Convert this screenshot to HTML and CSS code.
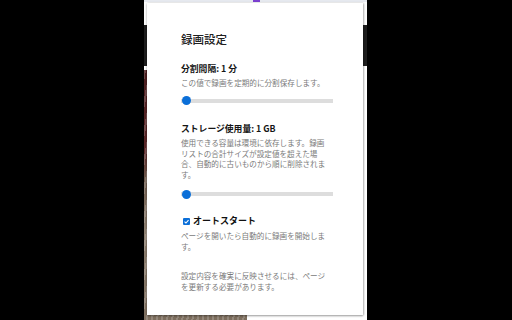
FILE: index.html
```html
<!DOCTYPE html>
<html lang="ja">
<head>
<meta charset="utf-8">
<title>録画設定</title>
<link rel="stylesheet" href="styles.css">
</head>
<body>
<div class="page">
  <div class="bg-band"><span class="bg-mark"></span></div>
  <div class="bg-head"></div>
  <div class="bg-dark"></div>
  <div class="bg-gap"></div>
  <div class="bg-body">
    <div class="photo"></div>
    <div class="bg-text"></div>
  </div>

  <section class="popup">
    <h1 class="title">録画設定</h1>

    <div class="label label-first">分割間隔: 1 分</div>
    <p class="desc desc-first">この値で録画を定期的に分割保存します。</p>
    <div class="slider slider-first"><span class="thumb"></span></div>

    <div class="label label-second">ストレージ使用量: 1 GB</div>
    <p class="desc desc-second">使用できる容量は環境に依存します。録画リストの合計サイズが設定値を超えた場合、自動的に古いものから順に削除されます。</p>
    <div class="slider slider-second"><span class="thumb"></span></div>

    <div class="check-row">
      <span class="checkbox"><svg viewBox="0 0 10 10" width="7" height="7"><path d="M2.2 5.2 L4.2 7.2 L7.9 2.9" fill="none" stroke="#fff" stroke-width="1.6"/></svg></span>
      <span class="check-label">オートスタート</span>
    </div>
    <p class="desc desc-third">ページを開いたら自動的に録画を開始します。</p>

    <p class="desc footer">設定内容を確実に反映させるには、ページを更新する必要があります。</p>
  </section>
</div>
</body>
</html>
```

FILE: styles.css
```css
html, body {
  margin: 0;
  padding: 0;
}
body {
  width: 512px;
  height: 320px;
  overflow: hidden;
  background: #000;
  font-family: "Noto Sans CJK JP", "Noto Sans", sans-serif;
}
.page {
  position: relative;
  margin-left: 144px;
  width: 223px;
  height: 320px;
  display: flex;
  flex-direction: column;
  background: #fff;
}
.bg-band {
  height: 2px;
  background: #e6e9ef;
  display: flex;
}
.bg-mark {
  width: 7px;
  height: 2px;
  margin-left: 109px;
  background: #7b3fd0;
}
.bg-head {
  height: 23px;
  background: #fdfdfd;
}
.bg-dark {
  height: 41px;
  background: #1d1d1d;
}
.bg-gap {
  height: 4px;
  background: #fff;
}
.bg-body {
  flex: 1;
  display: flex;
}
.photo {
  width: 103px;
  background:
    repeating-linear-gradient(100deg, rgba(255,255,255,0.18) 0 2px, rgba(0,0,0,0) 2px 5px),
    linear-gradient(to bottom, #4a1d1e 0, #5a2627 80px, #6d5a4c 110px, #8d7f70 160px, #7d6e5e 250px);
}
.bg-text {
  flex: 1;
  background: #fff;
}

.popup {
  position: absolute;
  left: 3px;
  top: 3px;
  width: 216px;
  height: 311.5px;
  box-sizing: border-box;
  padding: 28px 31px 0 34px;
  background: #fff;
  box-shadow: 0 1px 2px rgba(0,0,0,0.35), 1px 0 2px rgba(0,0,0,0.2);
  display: flex;
  flex-direction: column;
}
.title {
  margin: 0;
  font-size: 11.5px;
  line-height: 16px;
  font-weight: 500;
  color: #202020;
}
.label {
  font-size: 8.8px;
  line-height: 12px;
  font-weight: 700;
  color: #151515;
}
.label-first { margin-top: 16px; }
.label-second { margin-top: 18px; }
.desc {
  margin: 0;
  width: 150px;
  font-size: 7.6px;
  line-height: 10.5px;
  color: #7a7a7a;
}
.desc-first { margin-top: 3px; }
.desc-second { margin-top: 3.5px; }
.desc-third { margin-top: 4px; }
.footer { margin-top: 18.8px; }

.slider {
  width: 152px;
  height: 9px;
  display: flex;
  align-items: center;
  background: linear-gradient(to bottom, transparent 2.5px, #dddddd 2.5px, #dddddd 6.5px, transparent 6.5px);
  border-radius: 2px;
}
.slider-first { margin-top: 7px; }
.slider-second { margin-top: 9.7px; }
.thumb {
  width: 9px;
  height: 9px;
  margin-left: 0.5px;
  border-radius: 50%;
  background: #0b6fd8;
}

.check-row {
  margin-top: 16.8px;
  height: 12px;
  display: flex;
  align-items: center;
  gap: 3.5px;
}
.checkbox {
  width: 7px;
  height: 7px;
  margin-left: 1.5px;
  border-radius: 1px;
  background: #0b6fd8;
  display: flex;
}
.check-label {
  font-size: 9px;
  line-height: 12px;
  font-weight: 700;
  color: #111;
}
```
